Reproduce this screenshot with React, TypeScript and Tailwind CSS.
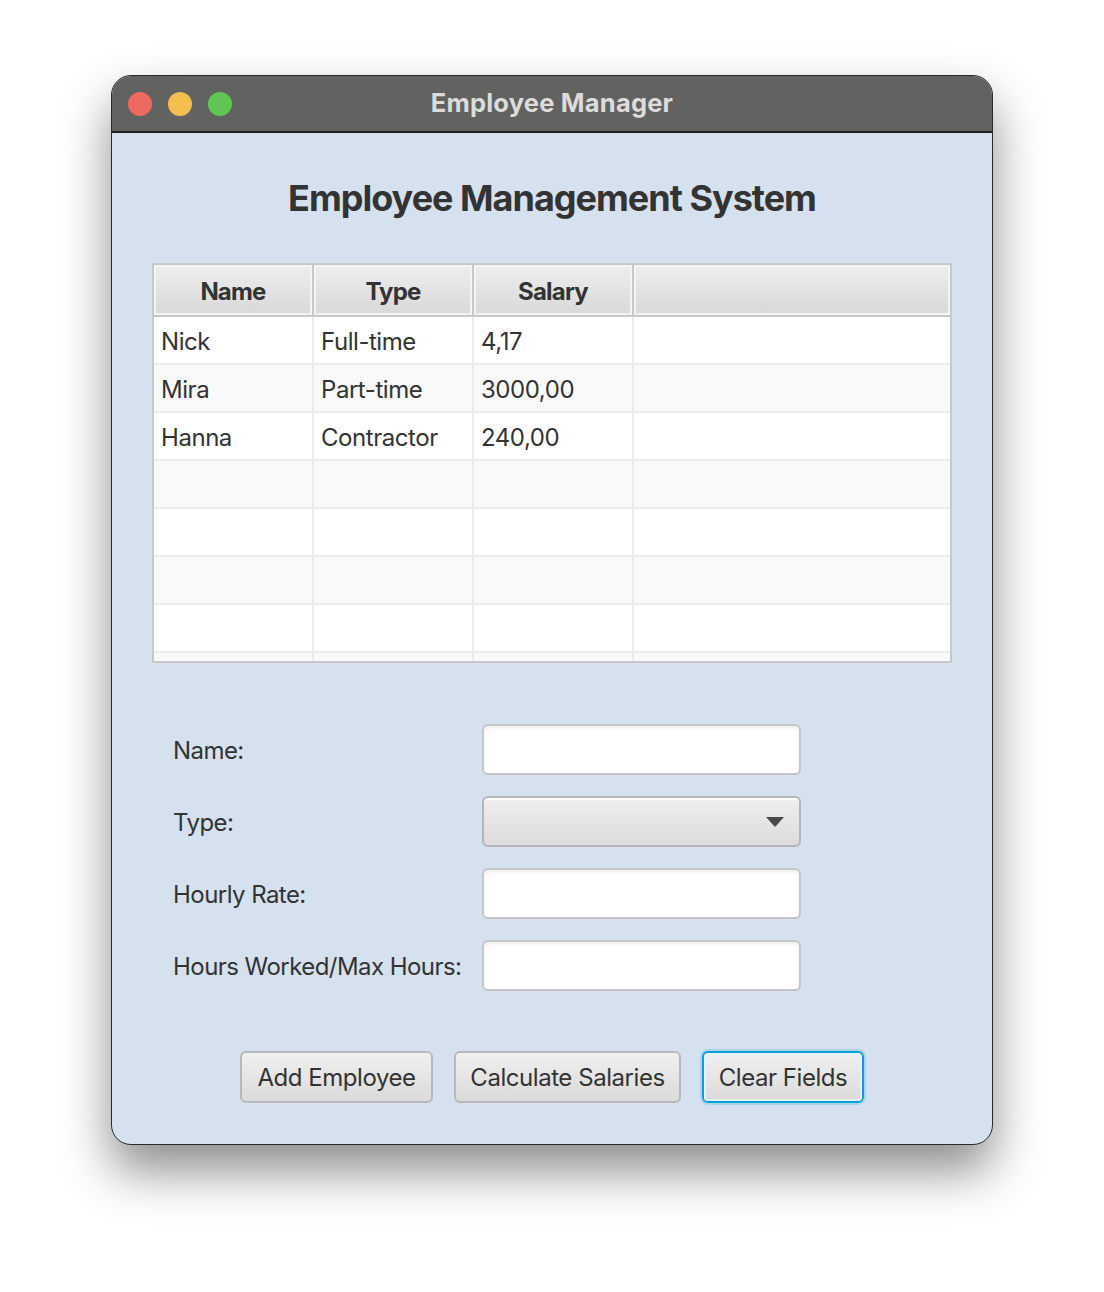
import React from "react";

const rows: [string, string, string][] = [
  ["Nick", "Full-time", "4,17"],
  ["Mira", "Part-time", "3000,00"],
  ["Hanna", "Contractor", "240,00"],
  ["", "", ""],
  ["", "", ""],
  ["", "", ""],
  ["", "", ""],
  ["", "", ""],
];

function TableRow({ cells, idx }: { cells: [string, string, string]; idx: number }) {
  const bg = idx % 2 === 0 ? "bg-white" : "bg-[#f9f9f9]";
  return (
    <div className={`flex h-[48px] shrink-0 border-b-2 border-[#ececec] ${bg}`}>
      {cells.map((c, i) => (
        <div
          key={i}
          className="w-[160px] shrink-0 border-r-2 border-[#ececec] pl-[7px] pt-[3px] flex items-center text-[24px] tracking-[-0.45px] text-[#333333]"
        >
          {c}
        </div>
      ))}
      <div className="flex-1" />
    </div>
  );
}

function HeaderCell({ label, last }: { label: string; last?: boolean }) {
  return (
    <div
      className={`${last ? "flex-1" : "w-[160px] shrink-0 border-r-2 border-[#c8c8c8]"} h-full`}
    >
      <div className="h-full border-2 border-[#f4f4f4] bg-gradient-to-b from-[#ededed] to-[#d9d9d9] flex items-center justify-center pt-[4px] text-[24px] font-bold tracking-[-0.8px] text-[#333333]">
        {label}
      </div>
    </div>
  );
}

function TextInput() {
  return (
    <div className="w-[319px] h-[51px] rounded-[6px] border-2 border-[#c6c6c6] bg-white shadow-[inset_0_3px_3px_rgba(0,0,0,0.06)]" />
  );
}

function Combo() {
  return (
    <div className="w-[319px] h-[51px] rounded-[6px] border-2 border-[#b5b5b5] bg-gradient-to-b from-[#eeeeee] to-[#dcdcdc] shadow-[inset_0_2px_0_rgba(255,255,255,0.8)] flex items-center justify-end pr-[15px]">
      <svg width="18" height="10" viewBox="0 0 18 10">
        <polygon points="0,0 18,0 9,10" fill="#4a4a4a" />
      </svg>
    </div>
  );
}

function FormRow({ label, children }: { label: string; children: React.ReactNode }) {
  return (
    <div className="flex items-center h-[51px]">
      <div className="w-[309px] shrink-0 pt-[2px] text-[24px] text-[#333333] tracking-[-0.55px]">{label}</div>
      {children}
    </div>
  );
}

function Button({ label, w, focused }: { label: string; w: string; focused?: boolean }) {
  return (
    <div
      className={`${w} h-[52px] rounded-[6px] border-2 ${
        focused
          ? "border-[#0a9fd9] shadow-[0_0_0_2px_rgba(10,159,217,0.2)]"
          : "border-[#b8b8b8]"
      } bg-gradient-to-b from-[#f0f0f0] to-[#dadada] flex items-center justify-center pt-[2px] text-[24px] text-[#333333] tracking-[-0.45px]`}
    >
      {focused ? (
        <div className="w-full h-full rounded-[4px] border-2 border-[#e6f1f8] flex items-center justify-center">
          {label}
        </div>
      ) : (
        label
      )}
    </div>
  );
}

export default function App() {
  return (
    <div
      className="w-[1104px] h-[1292px] bg-white pt-[75px] pl-[111px]"
      style={{ fontFamily: "Inter, 'Noto Sans', sans-serif" }}
    >
      <div className="w-[882px] h-[1070px] rounded-[20px] border border-[#2a2a2a] overflow-hidden shadow-[0_26px_50px_rgba(0,0,0,0.45)] flex flex-col bg-[#d5e1ef]">
        <div className="h-[57px] shrink-0 bg-[#626260] border-b-2 border-[#1e1e1e] relative flex items-center justify-center">
          <div className="absolute left-[16px] top-[16px] flex gap-[16px]">
            <div className="w-[24px] h-[24px] rounded-full bg-[#ed6a5e]" />
            <div className="w-[24px] h-[24px] rounded-full bg-[#f5bf4f]" />
            <div className="w-[24px] h-[24px] rounded-full bg-[#61c554]" />
          </div>
          <div className="text-[25.5px] font-bold text-[#dcdcdc] tracking-[0.2px]">Employee Manager</div>
        </div>
        <div className="flex-1 flex flex-col px-[40px]">
          <div className="mt-[42px] h-[44px] flex items-center justify-center pt-[2px] text-[36px] font-bold text-[#333333] tracking-[-1px]">
            Employee Management System
          </div>
          <div className="mt-[44px] w-[800px] h-[400px] border-2 border-[#c8c8c8] bg-white overflow-hidden flex flex-col">
            <div className="h-[52px] shrink-0 flex border-b-2 border-[#c8c8c8]">
              <HeaderCell label="Name" />
              <HeaderCell label="Type" />
              <HeaderCell label="Salary" />
              <HeaderCell label="" last />
            </div>
            {rows.map((r, i) => (
              <TableRow key={i} cells={r} idx={i} />
            ))}
          </div>
          <div className="mt-[61px] pl-[21px] flex flex-col gap-[21px]">
            <FormRow label="Name:">
              <TextInput />
            </FormRow>
            <FormRow label="Type:">
              <Combo />
            </FormRow>
            <FormRow label="Hourly Rate:">
              <TextInput />
            </FormRow>
            <FormRow label="Hours Worked/Max Hours:">
              <TextInput />
            </FormRow>
          </div>
          <div className="mt-[60px] flex justify-center gap-[21px]">
            <Button label="Add Employee" w="w-[193px]" />
            <Button label="Calculate Salaries" w="w-[227px]" />
            <Button label="Clear Fields" w="w-[162px]" focused />
          </div>
        </div>
      </div>
    </div>
  );
}
